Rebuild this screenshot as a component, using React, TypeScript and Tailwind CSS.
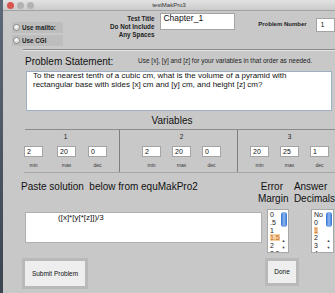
import React from 'react';

function Radio({ label }: { label: string }) {
  return (
    <div className="flex h-[11px] w-[51px] items-center bg-[#bdbdbd] pl-[1px]">
      <span className="h-[7px] w-[7px] rounded-full border border-[#8a8a8a] bg-gradient-to-b from-white to-[#d8d8d8]" />
      <span className="ml-[2px] text-[6.3px] font-bold leading-[8px] text-[#222]">{label}</span>
    </div>
  );
}

function NumBox({ value, label, ml }: { value: string; label: string; ml: string }) {
  return (
    <div className={`flex w-[19px] flex-col items-center ${ml}`}>
      <div className="h-[11px] w-[19px] border border-[#a4a4a4] bg-white pl-[2px] text-[7px] leading-[10px] text-[#111]">
        {value}
      </div>
      <div className="mt-[5px] text-[5px] leading-[7px] text-[#333]">{label}</div>
    </div>
  );
}

function VarGroup({ n, vals, first, offs, width, divider }: {
  n: string;
  vals: string[];
  first: string;
  offs: string[];
  width: string;
  divider: boolean;
}) {
  return (
    <div className={`flex flex-col ${width} ${divider ? 'border-r border-[#7e7e7e]' : ''}`}>
      <div className={`flex ${first}`}>
        <div className="flex flex-col items-center">
          <div className="mt-[3px] text-[6.5px] leading-[8px] text-[#222]">{n}</div>
          <div className="mt-[5px] flex">
            <NumBox value={vals[0]} label="min" ml={offs[0]} />
            <NumBox value={vals[1]} label="max" ml={offs[1]} />
            <NumBox value={vals[2]} label="dec" ml={offs[2]} />
          </div>
        </div>
      </div>
    </div>
  );
}

function ListBox({ items, sel }: { items: string[]; sel: number }) {
  return (
    <div className="flex h-[44px] overflow-hidden border border-[#a8a8a8] bg-white">
      <div className="flex-1 pt-[1px] pl-[2px]">
        {items.map((it, i) => (
          <div key={it} className="h-[7.8px] text-[7px] leading-[7.8px]">
            <span className={i === sel ? 'bg-[#f7cfa0] text-[#c06a20]' : 'text-[#222]'}>{it}</span>
          </div>
        ))}
      </div>
      <div className="mr-[1px] flex w-[7px] flex-col items-center">
        <div className="mt-[2px] h-[15px] w-[6px] rounded-full bg-gradient-to-r from-[#2f6fd0] via-[#8fb8f0] to-[#2f6fd0]" />
        <div className="mt-[10px] text-[4px] leading-[7px] text-[#444]">▲</div>
        <div className="text-[4px] leading-[7px] text-[#444]">▼</div>
      </div>
    </div>
  );
}

export default function App() {
  return (
    <div className="flex h-[293px] w-[335px] overflow-hidden font-['Liberation_Sans',Arial,sans-serif] text-[#222]">
      <div className="w-[3px] bg-gradient-to-b from-[#5d6878] to-[#3c4450]" />
      <div className="flex w-[332px] flex-col bg-[#c8c8c8]">
        {/* title bar */}
        <div className="flex h-[11px] items-center border-b border-[#a2a2a2] bg-gradient-to-b from-[#e2e2e2] to-[#cbcbcb]">
          <div className="ml-[4px] flex gap-[3px]">
            <span className="h-[7px] w-[7px] rounded-full bg-[#d8544e]" />
            <span className="h-[7px] w-[7px] rounded-full bg-[#b2b2b2]" />
            <span className="h-[7px] w-[7px] rounded-full bg-[#b2b2b2]" />
          </div>
          <div className="flex-1 pr-[31px] text-center text-[6px] leading-[8px] text-[#333]">testMakPro3</div>
        </div>

        {/* header */}
        <div className="flex h-[38px] items-start">
          <div className="ml-[9px] mt-[11px] flex flex-col gap-[2px]">
            <Radio label="Use mailto:" />
            <Radio label="Use CGI" />
          </div>
          <div className="ml-[34px] mt-[4px] w-[60px] text-right text-[6.3px] font-bold leading-[8px] text-[#222]">
            <div>Test Title</div>
            <div>Do Not Include</div>
            <div>Any Spaces</div>
          </div>
          <div className="ml-[6px] mt-[2px] h-[17px] w-[78px] border border-[#a4a4a4] bg-white pl-[2px] text-[8.5px] leading-[9px] text-[#111]">
            Chapter_1
          </div>
          <div className="ml-[23px] mt-[9px] w-[49px] whitespace-nowrap text-[6px] font-bold leading-[8px]">Problem Number</div>
          <div className="ml-[9px] mt-[7px] h-[14px] w-[20px] border border-[#a4a4a4] bg-white pl-[4px] text-[7px] leading-[12px]">
            1
          </div>
        </div>

        <div className="ml-[20px] border-t border-[#8c8c8c]" />
        <div className="ml-[20px] border-t border-[#e4e4e4]" />

        {/* problem statement */}
        <div className="flex h-[20px] items-start">
          <div className="ml-[22px] mt-[5px] w-[113px] text-[10px] leading-[12px] text-[#111]">Problem Statement:</div>
          <div className="mt-[6px] whitespace-nowrap text-[6.5px] leading-[8px] text-[#222]">
            Use [x], [y] and [z] for your variables in that order as needed.
          </div>
        </div>
        <div className="ml-[23px] h-[40px] w-[306px] border border-[#9fb0c4] bg-white pl-[6px] pt-[0px] text-[8px] leading-[8.5px] text-[#111]">
          To the nearest tenth of a cubic cm, what is the volume of a pyramid with
          <br />
          rectangular base with sides [x] cm and [y] cm, and height [z] cm?
        </div>

        {/* variables */}
        <div className="h-[18px] pl-[6px] pt-[4px] text-center text-[10px] leading-[12px] text-[#111]">Variables</div>
        <div className="ml-[22px] border-t border-[#8c8c8c]" />
        <div className="ml-[21px] flex h-[43px] border-b border-[#a6a6a6]">
          <VarGroup n="1" vals={['2', '20', '0']} first="ml-[0px]" offs={['ml-[0px]', 'ml-[14px]', 'ml-[12px]']} width="w-[96px]" divider />
          <VarGroup n="2" vals={['2', '20', '0']} first="ml-[22px]" offs={['ml-[0px]', 'ml-[11px]', 'ml-[11px]']} width="w-[118px]" divider />
          <VarGroup n="3" vals={['20', '25', '1']} first="ml-[12px]" offs={['ml-[0px]', 'ml-[11px]', 'ml-[11px]']} width="w-[97px]" divider={false} />
        </div>

        {/* labels row */}
        <div className="flex h-[36px] items-start text-[10px] leading-[12px] text-[#111]">
          <div className="ml-[18px] mt-[8px] w-[243px] whitespace-pre">Paste solution  below from equMakPro2</div>
          <div className="mt-[8px] w-[28px] text-center">
            <div>Error</div>
            <div>Margin</div>
          </div>
          <div className="ml-[8px] mt-[8px] whitespace-nowrap">
            <div>Answer</div>
            <div>Decimals</div>
          </div>
        </div>

        {/* textarea + lists */}
        <div className="flex h-[45px] items-start">
          <div className="ml-[22px] mt-[3px] h-[31px] w-[237px] border border-[#b0b0b0] bg-white pl-[32px] text-[8px] leading-[9px] text-[#111]">
            ([x]*[y[*[z]])/3
          </div>
          <div className="ml-[5px] w-[22px]">
            <ListBox items={['0', '.5', '1', '1.5', '2', '2.5']} sel={3} />
          </div>
          <div className="ml-[22px] w-[23px]">
            <ListBox items={['No', '0', '1', '2', '3', '4']} sel={2} />
          </div>
        </div>

        {/* buttons */}
        <div className="flex items-start">
          <button className="ml-[19px] mt-[4px] h-[31px] w-[66px] border-[3px] border-[#b9b9b9] bg-[#eeeeee] text-[6.5px] text-[#111]">
            Submit Problem
          </button>
          <button className="ml-[177px] mt-[4px] h-[28px] w-[34px] border-[3px] border-[#b9b9b9] bg-[#eeeeee] text-[6.5px] text-[#111]">
            Done
          </button>
        </div>
      </div>
    </div>
  );
}
